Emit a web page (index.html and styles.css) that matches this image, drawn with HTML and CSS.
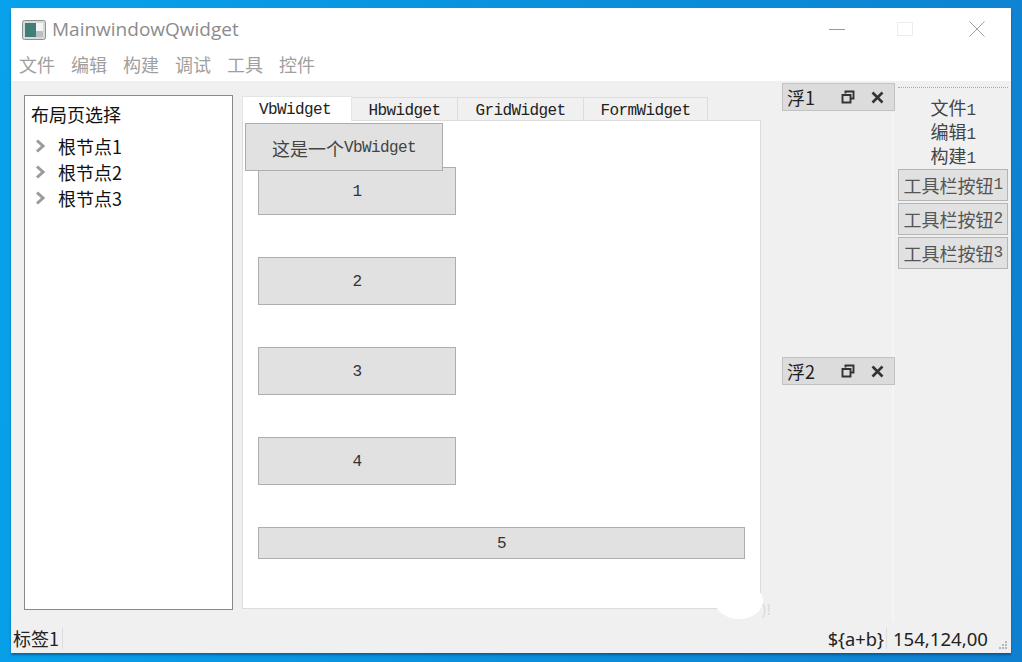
FILE: index.html
```html
<!DOCTYPE html>
<html lang="zh">
<head>
<meta charset="utf-8">
<title>MainwindowQwidget</title>
<link rel="stylesheet" href="styles.css">
</head>
<body>
<div class="window">
  <header class="titlebar">
    <svg class="app-icon" width="24" height="20" viewBox="0 0 24 20"><rect x="0.5" y="0.5" width="23" height="19" rx="2" fill="#d6dad9" stroke="#8a9291"/><rect x="3" y="3" width="11" height="14" fill="#3f7f78"/><rect x="14" y="3" width="7" height="8" fill="#f4f6f6"/><rect x="14" y="11" width="7" height="6" fill="#b9c0bf"/></svg>
    <span class="app-title">MainwindowQwidget</span>
    <div class="win-controls">
      <svg width="16" height="16" viewBox="0 0 16 16"><path d="M0 8.5H16" stroke="#9a9a9a"/></svg>
      <svg width="16" height="16" viewBox="0 0 16 16"><rect x="0.5" y="1.5" width="15" height="13" fill="none" stroke="#ececec"/></svg>
      <svg class="win-close" width="16" height="16" viewBox="0 0 16 16"><path d="M0.5 0.5L15.5 15.5M15.5 0.5L0.5 15.5" stroke="#a0a0a0"/></svg>
    </div>
  </header>
  <nav class="menubar">
    <span>文件</span><span>编辑</span><span>构建</span><span>调试</span><span>工具</span><span>控件</span>
  </nav>
  <main class="main">
    <section class="tree">
      <div class="tree-head">布局页选择</div>
      <div class="tree-row"><svg width="10" height="14" viewBox="0 0 10 14"><path d="M2 1.5L8 7L2 12.5" fill="none" stroke="#9b9b9b" stroke-width="3"/></svg><span>根节点1</span></div>
      <div class="tree-row"><svg width="10" height="14" viewBox="0 0 10 14"><path d="M2 1.5L8 7L2 12.5" fill="none" stroke="#9b9b9b" stroke-width="3"/></svg><span>根节点2</span></div>
      <div class="tree-row"><svg width="10" height="14" viewBox="0 0 10 14"><path d="M2 1.5L8 7L2 12.5" fill="none" stroke="#9b9b9b" stroke-width="3"/></svg><span>根节点3</span></div>
    </section>
    <section class="tabs">
      <div class="tabbar">
        <div class="tab active"><span class="mono">VbWidget</span></div>
        <div class="tab t2"><span class="mono">Hbwidget</span></div>
        <div class="tab t3"><span class="mono">GridWidget</span></div>
        <div class="tab t4"><span class="mono">FormWidget</span></div>
      </div>
      <div class="pane">
        <div class="qlabel">这是一个<span class="mono">VbWidget</span></div>
        <div class="qbtn"><span class="mono">1</span></div>
        <div class="qbtn"><span class="mono">2</span></div>
        <div class="qbtn"><span class="mono">3</span></div>
        <div class="qbtn"><span class="mono">4</span></div>
        <div class="qbtn wide"><span class="mono">5</span></div>
        <div class="blob"></div>
        <span class="blob-mark">)!</span>
      </div>
    </section>
    <aside class="docks">
      <div class="dock">
        <div class="dock-title"><span class="dock-name">浮1</span>
          <svg class="dock-float" width="14" height="14" viewBox="0 0 14 14"><path d="M4.5 3.5V1.5H12.5V8.5H9.5M1.5 5H9.5V12.5H1.5Z" fill="none" stroke="#333" stroke-width="1.9"/></svg>
          <svg class="dock-close" width="13" height="13" viewBox="0 0 13 13"><path d="M1.5 1.5L11.5 11.5M11.5 1.5L1.5 11.5" stroke="#333" stroke-width="2.6"/></svg>
        </div>
      </div>
      <div class="dock">
        <div class="dock-title"><span class="dock-name">浮2</span>
          <svg class="dock-float" width="14" height="14" viewBox="0 0 14 14"><path d="M4.5 3.5V1.5H12.5V8.5H9.5M1.5 5H9.5V12.5H1.5Z" fill="none" stroke="#333" stroke-width="1.9"/></svg>
          <svg class="dock-close" width="13" height="13" viewBox="0 0 13 13"><path d="M1.5 1.5L11.5 11.5M11.5 1.5L1.5 11.5" stroke="#333" stroke-width="2.6"/></svg>
        </div>
      </div>
    </aside>
    <aside class="toolbar">
      <div class="tool-label">文件<span class="mono">1</span></div>
      <div class="tool-label">编辑<span class="mono">1</span></div>
      <div class="tool-label">构建<span class="mono">1</span></div>
      <div class="tool-btn">工具栏按钮<span class="mono">1</span></div>
      <div class="tool-btn">工具栏按钮<span class="mono">2</span></div>
      <div class="tool-btn">工具栏按钮<span class="mono">3</span></div>
    </aside>
  </main>
  <footer class="statusbar">
    <span class="status-left">标签1</span>
    <span class="status-right">${a+b}</span>
    <span class="status-value">154,124,00</span>
    <svg class="grip" width="10" height="10" viewBox="0 0 10 10"><path d="M7 1h2v2H7zM4 4h2v2H4zM7 4h2v2H7zM1 7h2v2H1zM4 7h2v2H4zM7 7h2v2H7z" fill="#b5b8b8"/></svg>
  </footer>
</div>
</body>
</html>
```
FILE: styles.css
```css
* { box-sizing: border-box; }
html, body { margin: 0; height: 662px; overflow: hidden; }
body {
  background: linear-gradient(100deg, #07a2ec 0%, #0a90dc 50%, #0f80cf 100%);
  font-family: "Noto Sans CJK SC", "Noto Sans", sans-serif;
  font-size: 18px;
  color: #1a1a1a;
  padding: 8px 11px 9px;
}
.window {
  width: 1000px;
  height: 645px;
  background: #f0f0f0;
  display: flex;
  flex-direction: column;
  box-shadow: 0 2px 2px rgba(0, 40, 80, .45);
}
.titlebar {
  height: 42px;
  background: #fff;
  display: flex;
  align-items: center;
  padding-left: 11px;
  flex: none;
}
.app-icon { margin-top: 1px; }
.app-title {
  font-family: "Open Sans", sans-serif;
  font-size: 19px;
  color: #8c8c8c;
  margin-left: 6px;
  line-height: 42px;
}
.win-controls {
  margin-left: auto;
  margin-right: 26px;
  display: flex;
  gap: 52px;
}
.win-close { margin-left: 4px; }
.menubar {
  height: 31px;
  background: #fff;
  color: #a0a0a0;
  display: flex;
  gap: 16px;
  padding-left: 8px;
  line-height: 28px;
  flex: none;
}
.main { flex: 1; display: flex; min-height: 0; }
.tree {
  width: 209px;
  margin: 14px 0 18px 13px;
  background: #fff;
  border: 1px solid #8a8a8a;
  padding: 5px 0 0 6px;
  color: #111;
}
.tree-head { height: 27px; line-height: 26px; margin-bottom: 5px; }
.tree-row { height: 26px; display: flex; align-items: center; padding-left: 4px; line-height: 26px; }
.tree-row span { margin-left: 13px; }
.tabs {
  width: 519px;
  margin: 15px 0 19px 9px;
  display: flex;
  flex-direction: column;
}
.tabbar { display: flex; align-items: flex-end; height: 25px; flex: none; position: relative; z-index: 1; margin-bottom: -1px; }
.tab {
  height: 24px;
  background: #f0f0f0;
  border: 1px solid #dcdcdc;
  border-left: 0;
  border-bottom: 1px solid #dcdcdc;
  text-align: center;
  line-height: 18px;
  color: #222;
}
.tab.active { width: 110px; height: 25px; background: #fff; border: 1px solid #e4e4e4; border-bottom: 0; line-height: 18px; padding-right: 4px; }
.t2 { width: 106px; }
.t3 { width: 126px; }
.t4 { width: 124px; }
.mono { font-family: "Liberation Mono", monospace; font-size: 16px; letter-spacing: -.6px; }
.pane {
  position: relative;
  flex: 1;
  background: #fff;
  border: 1px solid #dcdcdc;
  padding: 46px 15px 0;
  display: flex;
  flex-direction: column;
  gap: 42px;
  align-items: flex-start;
}
.qbtn, .qlabel {
  width: 198px;
  height: 48px;
  padding-top: 2px;
  background: #e1e1e1;
  border: 1px solid #adadad;
  display: flex;
  align-items: center;
  justify-content: center;
  color: #333;
  flex: none;
}
.qbtn.wide { width: 487px; height: 32px; }
.qlabel { position: absolute; left: 2px; top: 2px; z-index: 2; color: #444; }
.blob {
  position: absolute;
  right: -3px;
  bottom: -11px;
  width: 48px;
  height: 36px;
  background: #fff;
  border-radius: 50%;
}
.blob-mark {
  position: absolute;
  right: -11px;
  bottom: -9px;
  font-size: 14px;
  line-height: 16px;
  color: #d6d6d6;
}
.docks { position: relative; width: 113px; margin: 2px 0 0 21px; display: flex; flex-direction: column; gap: 246px; }
.docks::after {
  content: "";
  position: absolute;
  right: 1px;
  top: 30px;
  bottom: 6px;
  width: 2px;
  background: #f5f5f5;
}
.dock-title {
  position: relative;
  z-index: 1;
  height: 28px;
  background: #dcdcdc;
  border: 1px solid #c2c2c2;
  display: flex;
  align-items: center;
  padding-left: 4px;
  line-height: 26px;
}
.dock-name { color: #222; width: 53px; }
.dock-float { margin-left: 1px; }
.dock-close { margin-left: 16px; }
.toolbar { width: 110px; margin: 6px 0 0 3px; border-top: 1px dotted #a9a9a9; padding-top: 7px; }
.tool-label { height: 24px; line-height: 24px; text-align: center; color: #444; }
.tool-btn {
  height: 32px;
  margin-bottom: 2px;
  padding-bottom: 1px;
  background: #e1e1e1;
  border: 1px solid #b5b5b5;
  display: flex;
  align-items: center;
  justify-content: center;
  color: #555;
  white-space: nowrap;
}
.tool-label + .tool-btn { margin-top: 2px; }
.statusbar {
  height: 25px;
  flex: none;
  display: flex;
  align-items: center;
  padding: 0 0 4px 2px;
  position: relative;
  line-height: 21px;
  color: #222;
}
.status-left { border-right: 1px solid #dcdcdc; padding-right: 3px; }
.status-right { margin-left: auto; border-right: 1px solid #dcdcdc; padding-right: 2px; font-family: "Noto Sans", sans-serif; font-size: 18.3px; }
.status-value { margin-left: 6px; margin-right: 23px; font-family: "Noto Sans", sans-serif; font-size: 18.6px; }
.grip { position: absolute; right: 3px; bottom: 3px; }
```
